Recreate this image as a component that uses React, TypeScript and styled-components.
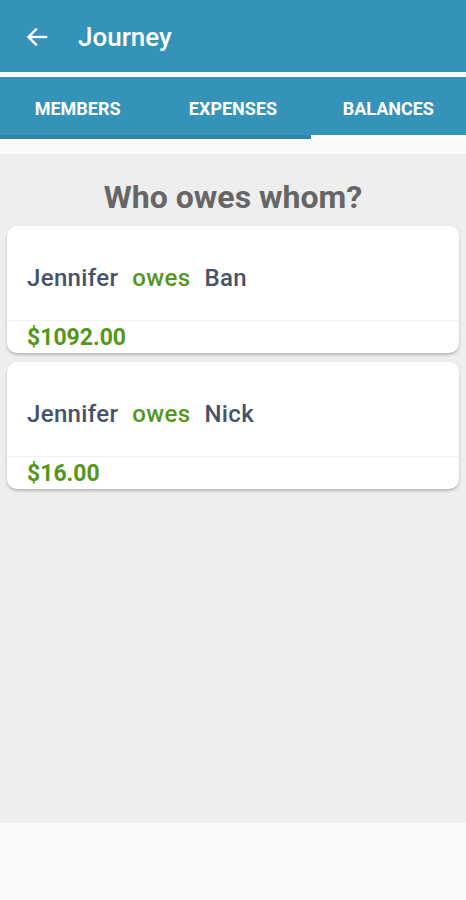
import styled, { createGlobalStyle } from 'styled-components';

const GlobalStyle = createGlobalStyle`
  html, body {
    margin: 0;
    padding: 0;
    background-color: #fafafa;
    font-family: Roboto, 'Liberation Sans', sans-serif;
  }
`;

const Screen = styled.div`
  width: 466px;
  height: 900px;
  display: flex;
  flex-direction: column;
  background-color: #fafafa;
  overflow: hidden;
`;

const AppBar = styled.header`
  height: 77px;
  display: flex;
  align-items: center;
  padding: 2px 0 0 24px;
  box-sizing: border-box;
  background-color: #3593ba;
  color: #ffffff;
  border-bottom: 5px solid #ffffff;
`;

const BackButton = styled.div`
  width: 26px;
  height: 26px;
  display: flex;
  align-items: center;
  justify-content: center;
  margin-right: 28px;
`;

const Title = styled.h1`
  margin: 0;
  font-size: 26px;
  font-weight: 500;
`;

const TabBar = styled.nav`
  height: 62px;
  display: flex;
  background-color: #3593ba;
`;

const Tab = styled.div<{ $active?: boolean }>`
  flex: 1;
  display: flex;
  align-items: center;
  justify-content: center;
  font-size: 18px;
  font-weight: 700;
  color: #ffffff;
  text-transform: uppercase;
  border-bottom: 4px solid ${(p) => (p.$active ? '#ffffff' : '#2d86ab')};
  box-sizing: border-box;
  padding-top: 5px;
`;

const Spacer = styled.div`
  height: 15px;
  background-color: #fafafa;
`;

const Content = styled.main`
  height: 669px;
  background-color: #eeeeee;
  padding: 26px 7px 0;
  box-sizing: border-box;
  display: flex;
  flex-direction: column;
  gap: 9px;
`;

const Heading = styled.h2`
  margin: 0 0 3px;
  text-align: center;
  font-size: 32px;
  font-weight: 700;
  color: #666666;
  line-height: 34px;
`;

const Card = styled.section`
  height: 127px;
  background-color: #ffffff;
  border-radius: 10px;
  box-shadow: 0 2px 3px rgba(0, 0, 0, 0.22);
  display: flex;
  flex-direction: column;
`;

const CardBody = styled.div`
  flex: 1;
  display: flex;
  align-items: center;
  padding: 9px 20px 0;
  font-size: 24px;
  font-weight: 500;
  letter-spacing: 0.35px;
  color: #465268;
  gap: 14px;
  border-bottom: 1px solid #f2f2f2;
`;

const Owes = styled.span`
  color: #55961b;
`;

const Amount = styled.div`
  height: 32px;
  display: flex;
  align-items: center;
  padding: 0 20px;
  font-size: 23px;
  font-weight: 700;
  color: #55961b;
`;

const debts = [
  { from: 'Jennifer', to: 'Ban', amount: '$1092.00' },
  { from: 'Jennifer', to: 'Nick', amount: '$16.00' },
];

function App() {
  return (
    <Screen>
      <GlobalStyle />
      <AppBar>
        <BackButton>
          <svg width="22" height="20" viewBox="0 0 22 20" fill="none" stroke="#ffffff" strokeWidth="2.4" strokeLinecap="square">
            <path d="M3 10 H20" />
            <path d="M10 2.5 L2.5 10 L10 17.5" />
          </svg>
        </BackButton>
        <Title>Journey</Title>
      </AppBar>
      <TabBar>
        <Tab>Members</Tab>
        <Tab>Expenses</Tab>
        <Tab $active>Balances</Tab>
      </TabBar>
      <Spacer />
      <Content>
        <Heading>Who owes whom?</Heading>
        {debts.map((d) => (
          <Card key={d.to}>
            <CardBody>
              <span>{d.from}</span>
              <Owes>owes</Owes>
              <span>{d.to}</span>
            </CardBody>
            <Amount>{d.amount}</Amount>
          </Card>
        ))}
      </Content>
    </Screen>
  );
}

export default App;
